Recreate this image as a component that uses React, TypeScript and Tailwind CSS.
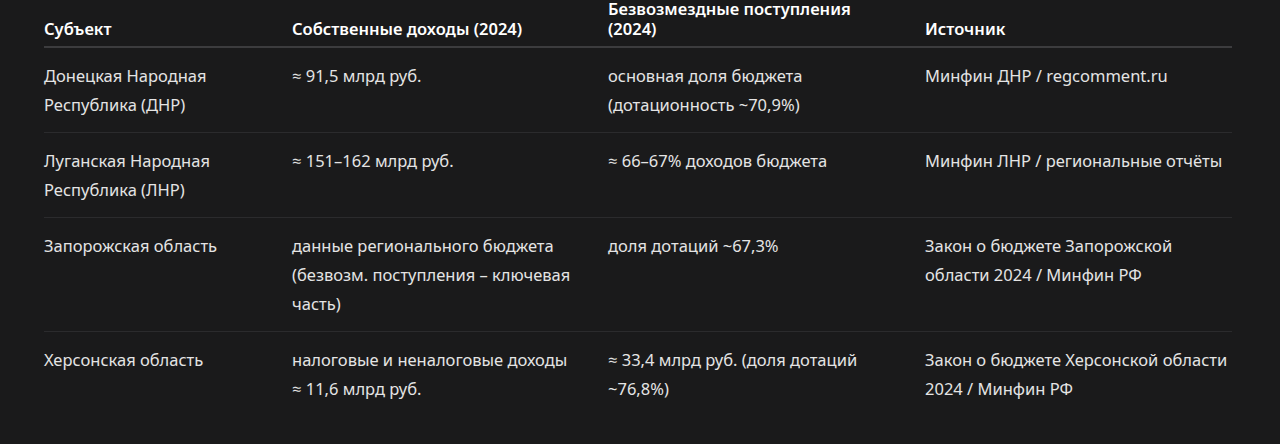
import React from "react";

const rows: string[][] = [
  [
    "Донецкая Народная Республика (ДНР)",
    "≈\u00a091,5 млрд руб.",
    "основная доля бюджета (дотационность ~70,9%)",
    "Минфин ДНР / regcomment.ru",
  ],
  [
    "Луганская Народная Республика (ЛНР)",
    "≈\u00a0151–162 млрд руб.",
    "≈\u00a066–67% доходов бюджета",
    "Минфин ЛНР / региональные отчёты",
  ],
  [
    "Запорожская область",
    "данные регионального бюджета (безвозм. поступления – ключевая часть)",
    "доля дотаций ~67,3%",
    "Закон о бюджете Запорожской области 2024 / Минфин РФ",
  ],
  [
    "Херсонская область",
    "налоговые и неналоговые доходы ≈\u00a011,6 млрд руб.",
    "≈\u00a033,4 млрд руб. (доля дотаций ~76,8%)",
    "Закон о бюджете Херсонской области 2024 / Минфин РФ",
  ],
];

const headers = [
  "Субъект",
  "Собственные доходы (2024)",
  "Безвозмездные поступления (2024)",
  "Источник",
];

const cols = "grid grid-cols-[248px_316px_317px_330px]";

export default function App() {
  return (
    <div
      className="w-[1280px] h-[444px] bg-[#1a1a1b] overflow-hidden pl-[44px] text-[#e4e4e4]"
      style={{ fontFamily: '"Noto Sans", "Open Sans", sans-serif' }}
    >
      <div className="w-[1188px] -mt-[1px]">
        <div className={`${cols} border-b-2 border-[#3c3c3e] pb-[7px]`}>
          {headers.map((h, i) => (
            <div
              key={i}
              className="self-end pr-6 text-[16.5px] leading-[20px] font-semibold text-white"
            >
              {h}
            </div>
          ))}
        </div>
        {rows.map((r, ri) => (
          <div
            key={ri}
            className={`${cols} py-[13px] ${ri < rows.length - 1 ? "border-b border-[#2b2b2d]" : ""}`}
          >
            {r.map((c, ci) => (
              <div
                key={ci}
                className={`${ci === 3 ? "pr-5" : "pr-6"} text-[16.5px] leading-[29px]`}
              >
                {c}
              </div>
            ))}
          </div>
        ))}
      </div>
    </div>
  );
}
